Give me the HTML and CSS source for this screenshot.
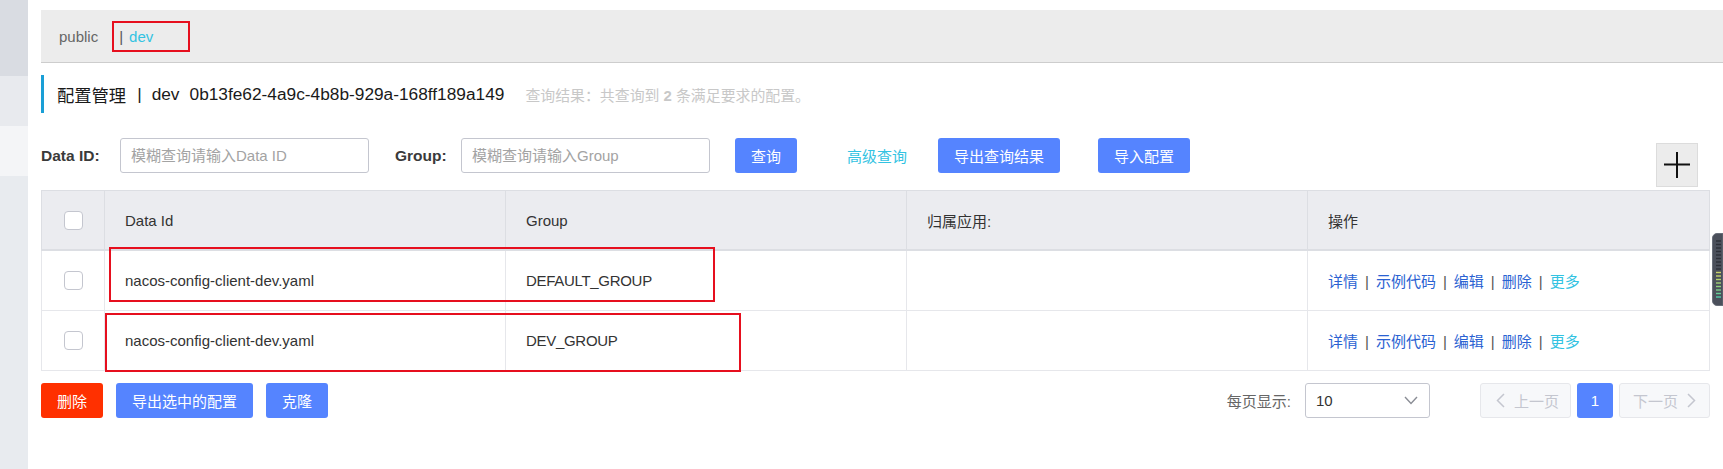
FILE: index.html
```html
<!DOCTYPE html>
<html lang="zh-CN">
<head>
    <meta charset="UTF-8">
    <meta name="viewport" content="width=device-width, initial-scale=1.0">
    <title>配置管理</title>
    <link rel="stylesheet" href="styles.css">
</head>
<body>
    <div class="sidebar">
        <div class="side-top"></div>
        <div class="side-item"></div>
        <div class="side-item side-active"></div>
        <div class="side-rest"></div>
    </div>

    <div class="main">
        <div class="ns-bar">
            <span class="ns">public</span>
            <span class="ns-current"><span class="ns-sep">|</span><span class="ns-dev">dev</span></span>
        </div>

        <div class="page-title">
            <span>配置管理</span><span class="title-sep">|</span><span>dev</span><span class="ns-id">0b13fe62-4a9c-4b8b-929a-168ff189a149</span>
            <span class="query-result">查询结果：共查询到 <b>2</b> 条满足要求的配置。</span>
        </div>

        <div class="search-row">
            <label class="label label-id">Data ID:</label>
            <input class="input" type="text" placeholder="模糊查询请输入Data ID">
            <label class="label label-group">Group:</label>
            <input class="input" type="text" placeholder="模糊查询请输入Group">
            <button class="btn btn-query">查询</button>
            <a class="link-adv">高级查询</a>
            <button class="btn btn-export">导出查询结果</button>
            <button class="btn btn-import">导入配置</button>
            <div class="add-box">
                <svg width="26" height="26" viewBox="0 0 26 26">
                    <line x1="0" y1="12.5" x2="26" y2="12.5" stroke="#111" stroke-width="2"/>
                    <line x1="13" y1="0" x2="13" y2="26" stroke="#111" stroke-width="2"/>
                </svg>
            </div>
        </div>

        <div class="table-wrap">
            <table class="config-table">
                <colgroup>
                    <col class="w-check">
                    <col class="w-col">
                    <col class="w-col">
                    <col class="w-col">
                    <col>
                </colgroup>
                <thead>
                    <tr>
                        <th class="cell-check"><span class="checkbox"></span></th>
                        <th>Data Id</th>
                        <th>Group</th>
                        <th>归属应用:</th>
                        <th>操作</th>
                    </tr>
                </thead>
                <tbody>
                    <tr>
                        <td class="cell-check"><span class="checkbox"></span></td>
                        <td>nacos-config-client-dev.yaml</td>
                        <td class="group">DEFAULT_GROUP</td>
                        <td></td>
                        <td class="ops">
                            <a>详情</a><span class="sep">|</span><a>示例代码</a><span class="sep">|</span><a>编辑</a><span class="sep">|</span><a>删除</a><span class="sep">|</span><a class="more">更多</a>
                        </td>
                    </tr>
                    <tr>
                        <td class="cell-check"><span class="checkbox"></span></td>
                        <td>nacos-config-client-dev.yaml</td>
                        <td class="group">DEV_GROUP</td>
                        <td></td>
                        <td class="ops">
                            <a>详情</a><span class="sep">|</span><a>示例代码</a><span class="sep">|</span><a>编辑</a><span class="sep">|</span><a>删除</a><span class="sep">|</span><a class="more">更多</a>
                        </td>
                    </tr>
                </tbody>
            </table>
            <div class="mark mark-row1"></div>
            <div class="mark mark-row2"></div>
        </div>

        <div class="bottom-row">
            <button class="btn btn-danger">删除</button>
            <button class="btn btn-gap">导出选中的配置</button>
            <button class="btn btn-gap">克隆</button>

            <div class="pager">
                <span class="page-size-label">每页显示:</span>
                <div class="select">
                    <span>10</span>
                    <svg width="14" height="9" viewBox="0 0 14 9">
                        <polyline points="1,1 7,7.5 13,1" fill="none" stroke="#8a8d95" stroke-width="1.4"/>
                    </svg>
                </div>
                <button class="page-btn page-prev">
                    <svg width="9" height="15" viewBox="0 0 9 15">
                        <polyline points="8,1 1.5,7.5 8,14" fill="none" stroke="#c4c6cf" stroke-width="1.5"/>
                    </svg>
                    <span>上一页</span>
                </button>
                <button class="page-num">1</button>
                <button class="page-btn page-next">
                    <span>下一页</span>
                    <svg width="9" height="15" viewBox="0 0 9 15">
                        <polyline points="1,1 7.5,7.5 1,14" fill="none" stroke="#c4c6cf" stroke-width="1.5"/>
                    </svg>
                </button>
            </div>
        </div>
    </div>

    <div class="meter">
        <svg width="11" height="73" viewBox="0 0 11 73">
            <path d="M11 0.5 H5 A4.5 4.5 0 0 0 0.5 5 V68 A4.5 4.5 0 0 0 5 72.5 H11 Z" fill="#4b505b" stroke="#6a6f7a"/>
            <g stroke-width="1.4">
                <line x1="4" y1="8" x2="9" y2="8" stroke="#2d3038"/>
                <line x1="4" y1="11.5" x2="9" y2="11.5" stroke="#2d3038"/>
                <line x1="4" y1="15" x2="9" y2="15" stroke="#2d3038"/>
                <line x1="4" y1="18.5" x2="9" y2="18.5" stroke="#2d3038"/>
                <line x1="4" y1="22" x2="9" y2="22" stroke="#2d3038"/>
                <line x1="4" y1="25.5" x2="9" y2="25.5" stroke="#2d3038"/>
                <line x1="4" y1="29" x2="9" y2="29" stroke="#2d3038"/>
                <line x1="4" y1="32.5" x2="9" y2="32.5" stroke="#2d3038"/>
                <line x1="4" y1="36" x2="9" y2="36" stroke="#2d3038"/>
                <line x1="4" y1="39.5" x2="9" y2="39.5" stroke="#c9d36a"/>
                <line x1="4" y1="43" x2="9" y2="43" stroke="#c3d36b"/>
                <line x1="4" y1="46.5" x2="9" y2="46.5" stroke="#b4d36f"/>
                <line x1="4" y1="50" x2="9" y2="50" stroke="#a2d274"/>
                <line x1="4" y1="53.5" x2="9" y2="53.5" stroke="#8fd17c"/>
                <line x1="4" y1="57" x2="9" y2="57" stroke="#7bd088"/>
                <line x1="4" y1="60.5" x2="9" y2="60.5" stroke="#66cf96"/>
                <line x1="4" y1="64" x2="9" y2="64" stroke="#52cea8"/>
            </g>
        </svg>
    </div>
</body>
</html>
```

FILE: styles.css
```css
body {
    margin: 0;
    display: flex;
    min-height: 469px;
    font-family: 'Liberation Sans', 'Noto Sans CJK SC', sans-serif;
    font-size: 15px;
    color: #333;
    background: #fff;
}
.sidebar {
    width: 28px;
    display: flex;
    flex-direction: column;
    flex-shrink: 0;
}
.side-top {
    height: 76px;
    background: #d9dce2;
}
.side-item {
    height: 50px;
    background: #e8eaee;
}
.side-active {
    background: #f4f5f7;
}
.side-rest {
    flex: 1;
    background: #e8ebef;
}
.main {
    flex: 1;
    padding: 10px 0 0 13px;
}

/* namespace bar */
.ns-bar {
    height: 52px;
    background: #ececec;
    border-bottom: 1px solid #cdcdcd;
    display: flex;
    align-items: center;
    padding-left: 18px;
}
.ns {
    color: #666;
}
.ns-current {
    display: inline-flex;
    align-items: center;
    box-sizing: border-box;
    height: 31px;
    margin-left: 14px;
    padding: 0 35px 0 5px;
    border: 2px solid #e60f1e;
}
.ns-sep {
    color: #555;
    margin-right: 6px;
}
.ns-dev {
    color: #33c3e2;
}

/* title */
.page-title {
    margin: 12px 13px 0 0;
    height: 38px;
    border-left: 3px solid #1a9fd6;
    display: flex;
    align-items: center;
    padding-left: 13px;
    font-size: 17.3px;
    color: #1a1a1a;
}
.title-sep {
    margin: 0 10px 0 11px;
}
.ns-id {
    margin-left: 10px;
}
.query-result {
    margin-left: 21px;
    font-size: 14.9px;
    color: #c8c8c8;
}

/* search row */
.search-row {
    margin: 25px 13px 0 0;
    height: 35px;
    display: flex;
    align-items: center;
}
.label {
    font-weight: bold;
    font-size: 15.5px;
    color: #3a3a3a;
}
.label-id {
    width: 79px;
}
.label-group {
    width: 66px;
    margin-left: 26px;
}
.input {
    box-sizing: border-box;
    width: 249px;
    height: 35px;
    border: 1px solid #c4c6cf;
    border-radius: 3px;
    padding: 0 10px;
    font-family: inherit;
    font-size: 15px;
    color: #333;
    outline: none;
}
.input::placeholder {
    color: #a3a3a3;
}
.btn {
    height: 35px;
    padding: 0 16px;
    border: none;
    border-radius: 3px;
    background: #5584ff;
    color: #fff;
    font-family: inherit;
    font-size: 15px;
    cursor: pointer;
}
.btn-query {
    margin-left: 25px;
}
.link-adv {
    margin-left: 50px;
    color: #33c3e2;
    cursor: pointer;
}
.btn-export {
    margin-left: 31px;
}
.btn-import {
    margin-left: 38px;
}
.add-box {
    box-sizing: border-box;
    width: 42px;
    height: 44px;
    margin: 5px 12px 0 auto;
    align-self: flex-start;
    background: #ececec;
    border: 1px solid #dcdcdc;
    display: flex;
    align-items: center;
    justify-content: center;
}

/* table */
.table-wrap {
    position: relative;
    margin: 17px 13px 0 0;
}
.config-table {
    width: 100%;
    border-collapse: collapse;
    table-layout: fixed;
    border: 1px solid #dcdee3;
}
.w-check {
    width: 63px;
}
.w-col {
    width: 401px;
}
.config-table th {
    height: 58px;
    background: #ebecf0;
    border-left: 1px solid #dcdee3;
    border-bottom: 2px solid #dcdee3;
    text-align: left;
    font-weight: normal;
    padding: 0 20px;
    color: #333;
}
.config-table td {
    height: 59px;
    border: 1px solid #e6e7eb;
    padding: 0 20px;
    color: #333;
}
.config-table .group {
    letter-spacing: -0.3px;
}
.config-table .cell-check {
    padding: 0;
    text-align: center;
}
.checkbox {
    display: inline-block;
    box-sizing: border-box;
    width: 19px;
    height: 19px;
    border: 1px solid #c4c6cf;
    border-radius: 4px;
    background: #fff;
    vertical-align: middle;
}
.ops a {
    color: #2a62d2;
    cursor: pointer;
}
.ops .more {
    color: #33c3e2;
}
.sep {
    margin: 0 7px;
    color: #555;
}
.mark {
    position: absolute;
    border: 2px solid #e60f1e;
    box-sizing: border-box;
}
.mark-row1 {
    left: 68px;
    top: 57px;
    width: 606px;
    height: 55px;
}
.mark-row2 {
    left: 64px;
    top: 123px;
    width: 636px;
    height: 59px;
}

/* bottom */
.bottom-row {
    margin: 12px 13px 0 0;
    height: 35px;
    display: flex;
    align-items: center;
}
.btn-danger {
    background: #ff3000;
}
.btn-gap {
    margin-left: 13px;
}
.pager {
    margin-left: auto;
    display: flex;
    align-items: center;
}
.page-size-label {
    color: #666;
}
.select {
    box-sizing: border-box;
    width: 125px;
    height: 35px;
    margin-left: 14px;
    border: 1px solid #c4c6cf;
    border-radius: 3px;
    display: flex;
    align-items: center;
    justify-content: space-between;
    padding: 0 11px 0 10px;
    color: #333;
}
.page-btn {
    box-sizing: border-box;
    width: 91px;
    height: 35px;
    display: flex;
    align-items: center;
    gap: 9px;
    background: #f7f8fa;
    border: 1px solid #e6e7eb;
    border-radius: 3px;
    color: #c4c6cf;
    font-family: inherit;
    font-size: 15px;
}
.page-prev {
    margin-left: 50px;
    padding: 0 0 0 15px;
}
.page-next {
    margin-left: 6px;
    padding: 0 0 0 13px;
}
.page-num {
    width: 36px;
    height: 35px;
    margin-left: 6px;
    border: none;
    border-radius: 3px;
    background: #5584ff;
    color: #fff;
    font-family: inherit;
    font-size: 15px;
}
.meter {
    position: absolute;
    right: 0;
    top: 233px;
    width: 11px;
    height: 73px;
}
.meter svg {
    display: block;
}
```
